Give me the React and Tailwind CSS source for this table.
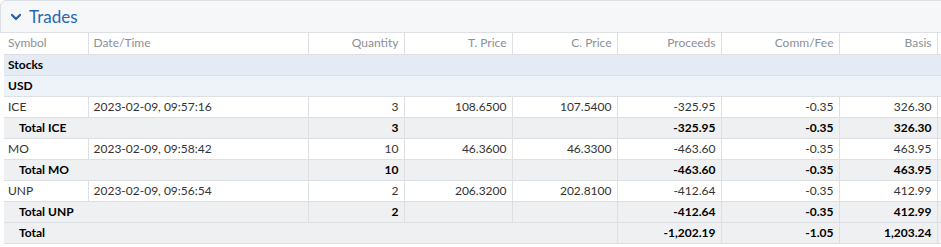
import { ChevronDown } from 'lucide-react';

const rows = [
    { type: 'trade', symbol: 'ICE', date: '2023-02-09, 09:57:16', qty: '3', tprice: '108.6500', cprice: '107.5400', proceeds: '-325.95', comm: '-0.35', basis: '326.30' },
    { type: 'sub', label: 'Total ICE', qty: '3', proceeds: '-325.95', comm: '-0.35', basis: '326.30' },
    { type: 'trade', symbol: 'MO', date: '2023-02-09, 09:58:42', qty: '10', tprice: '46.3600', cprice: '46.3300', proceeds: '-463.60', comm: '-0.35', basis: '463.95' },
    { type: 'sub', label: 'Total MO', qty: '10', proceeds: '-463.60', comm: '-0.35', basis: '463.95' },
    { type: 'trade', symbol: 'UNP', date: '2023-02-09, 09:56:54', qty: '2', tprice: '206.3200', cprice: '202.8100', proceeds: '-412.64', comm: '-0.35', basis: '412.99' },
    { type: 'sub', label: 'Total UNP', qty: '2', proceeds: '-412.64', comm: '-0.35', basis: '412.99' },
];

export default function App() {
    const cell = 'h-[21px] px-[5px] border-b border-[#dcdfe3] align-middle';
    const vline = 'border-r border-[#dcdfe3]';

    return (
        <div className="w-[941px] h-[247px] bg-white overflow-hidden" style={{ fontFamily: 'Lato, "Open Sans", sans-serif' }}>
            {/* Section header */}
            <div className="flex items-center h-[33px] w-[960px] bg-[#f6f7f8] border border-[#dcdfe3] rounded-tl-md pl-[7px]">
                <ChevronDown className="h-[16px] w-[16px] text-[#1f5fae]" strokeWidth={3.2} />
                <span className="ml-[5px] text-[17px] text-[#2469b3] leading-none">Trades</span>
            </div>

            {/* Table */}
            <div className="ml-[4px]">
                <table className="table-fixed border-collapse text-[12px] text-[#333]" style={{ width: 1000 }}>
                    <colgroup>
                        <col className="w-[84px]" />
                        <col className="w-[220px]" />
                        <col className="w-[96px]" />
                        <col className="w-[108px]" />
                        <col className="w-[105px]" />
                        <col className="w-[104px]" />
                        <col className="w-[118px]" />
                        <col className="w-[98px]" />
                        <col className="w-[67px]" />
                    </colgroup>
                    <thead>
                        <tr className="text-[#8b9097] bg-white">
                            <th className={`${cell} ${vline} font-normal text-left pl-[4px]`}>Symbol</th>
                            <th className={`${cell} ${vline} font-normal text-left`}>Date/Time</th>
                            <th className={`${cell} ${vline} font-normal text-right`}>Quantity</th>
                            <th className={`${cell} ${vline} font-normal text-right`}>T. Price</th>
                            <th className={`${cell} ${vline} font-normal text-right`}>C. Price</th>
                            <th className={`${cell} ${vline} font-normal text-right`}>Proceeds</th>
                            <th className={`${cell} ${vline} font-normal text-right`}>Comm/Fee</th>
                            <th className={`${cell} ${vline} font-normal text-right`}>Basis</th>
                            <th className={`${cell} font-normal text-right`}></th>
                        </tr>
                    </thead>
                    <tbody>
                        <tr className="bg-[#e4ebf5] font-bold text-black">
                            <td colSpan={9} className={`${cell} pl-[4px]`}>Stocks</td>
                        </tr>
                        <tr className="bg-[#eef2f9] font-bold text-black">
                            <td colSpan={9} className={`${cell} pl-[4px]`}>USD</td>
                        </tr>
                        {rows.map((r, i) =>
                            r.type === 'trade' ? (
                                <tr key={i} className="bg-white">
                                    <td className={`${cell} ${vline} pl-[4px]`}>{r.symbol}</td>
                                    <td className={`${cell} ${vline}`}>{r.date}</td>
                                    <td className={`${cell} ${vline} text-right`}>{r.qty}</td>
                                    <td className={`${cell} ${vline} text-right`}>{r.tprice}</td>
                                    <td className={`${cell} ${vline} text-right`}>{r.cprice}</td>
                                    <td className={`${cell} ${vline} text-right`}>{r.proceeds}</td>
                                    <td className={`${cell} ${vline} text-right`}>{r.comm}</td>
                                    <td className={`${cell} ${vline} text-right`}>{r.basis}</td>
                                    <td className={cell}></td>
                                </tr>
                            ) : (
                                <tr key={i} className="bg-[#eff0f2] font-bold text-black">
                                    <td colSpan={2} className={`${cell} ${vline} pl-[15px]`}>{r.label}</td>
                                    <td className={`${cell} ${vline} text-right`}>{r.qty}</td>
                                    <td className={`${cell} ${vline}`}></td>
                                    <td className={`${cell} ${vline}`}></td>
                                    <td className={`${cell} ${vline} text-right`}>{r.proceeds}</td>
                                    <td className={`${cell} ${vline} text-right`}>{r.comm}</td>
                                    <td className={`${cell} ${vline} text-right`}>{r.basis}</td>
                                    <td className={cell}></td>
                                </tr>
                            )
                        )}
                        <tr className="bg-[#eff0f2] font-bold text-black">
                            <td colSpan={5} className={`${cell} ${vline} pl-[15px]`}>Total</td>
                            <td className={`${cell} ${vline} text-right`}>-1,202.19</td>
                            <td className={`${cell} ${vline} text-right`}>-1.05</td>
                            <td className={`${cell} ${vline} text-right`}>1,203.24</td>
                            <td className={cell}></td>
                        </tr>
                    </tbody>
                </table>
            </div>
        </div>
    );
}
